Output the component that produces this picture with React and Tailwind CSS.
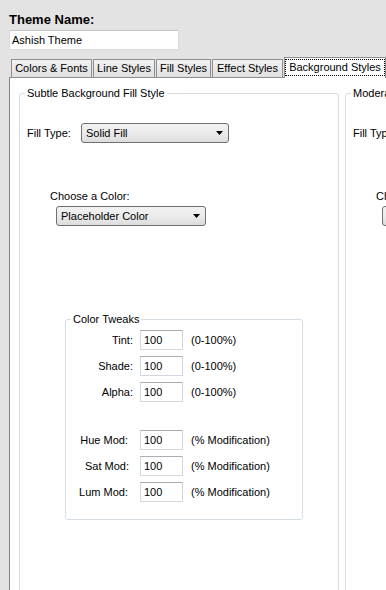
import React from 'react';

const font = "font-['Liberation_Sans',Arial,sans-serif]";

const Select = ({ value, className }) => (
    <div className={`flex items-center h-[20px] border border-[#707070] rounded-[3px] bg-gradient-to-b from-[#f2f2f2] via-[#ebebeb] to-[#dddddd] pl-[4px] pr-[5px] text-[11px] text-black ${className}`}>
        <span className="flex-1 truncate">{value}</span>
        <svg width="7" height="4" viewBox="0 0 7 4">
            <polygon points="0,0 7,0 3.5,4" fill="#000" />
        </svg>
    </div>
);

const Legend = ({ children }) => (
    <span className="block w-fit -mt-[7px] ml-[5px] px-[2px] bg-white leading-[13px] text-[11px] text-black whitespace-nowrap">
        {children}
    </span>
);

const TweakRow = ({ label, hint, labelClass = '', className = '' }) => (
    <div className={`flex items-center h-[20px] ${className}`}>
        <span className={`w-[67px] text-right text-[11px] text-black ${labelClass}`}>{label}</span>
        <div className="ml-[7px] w-[43px] h-[20px] bg-white border border-[#d3d7de] border-t-[#abadb3] flex items-center pl-[3px] text-[11px] text-black">
            100
        </div>
        <span className="ml-[8px] text-[11px] text-black whitespace-nowrap">{hint}</span>
    </div>
);

const FillPanel = ({ title }) => (
    <div className="shrink-0 w-[320px] h-[520px] border border-[#d5dde5] rounded-[3px]">
        <Legend>{title}</Legend>

        {/* Fill type */}
        <div className="flex items-center mt-[23px] pl-[7px]">
            <span className="w-[54px] text-[11px] text-black">Fill Type:</span>
            <Select value="Solid Fill" className="w-[148px]" />
        </div>

        {/* Color chooser */}
        <div className="mt-[47px] ml-[30px] leading-[13px] text-[11px] text-black">Choose a Color:</div>
        <Select value="Placeholder Color" className="mt-[3px] ml-[36px] w-[150px]" />

        {/* Color tweaks */}
        <div className="mt-[93px] ml-[45px] w-[238px] h-[201px] border border-[#d5dde5] rounded-[3px]">
            <Legend>Color Tweaks</Legend>
            <div className="mt-[4px] flex flex-col">
                <TweakRow label="Tint:" hint="(0-100%)" />
                <TweakRow label="Shade:" hint="(0-100%)" className="mt-[6px]" />
                <TweakRow label="Alpha:" hint="(0-100%)" className="mt-[6px]" />
                <TweakRow label="Hue Mod:" hint="(% Modification)" labelClass="pr-[5px]" className="mt-[28px]" />
                <TweakRow label="Sat Mod:" hint="(% Modification)" labelClass="pr-[4px]" className="mt-[6px]" />
                <TweakRow label="Lum Mod:" hint="(% Modification)" labelClass="pr-[5px]" className="mt-[6px]" />
            </div>
        </div>
    </div>
);

const tabs = [
    { name: 'Colors & Fonts', w: 'w-[81px]' },
    { name: 'Line Styles', w: 'w-[62px]' },
    { name: 'Fill Styles', w: 'w-[55px]' },
    { name: 'Effect Styles', w: 'w-[71px]' },
];

const App = () => {
    return (
        <div className={`w-[386px] h-[590px] overflow-hidden bg-[#e3e3e3] pt-[12px] ${font}`}>
            <div className="pl-[9px] text-[13px] leading-[15px] font-bold text-black">Theme Name:</div>
            <div className="ml-[9px] mt-[3px] w-[170px] h-[20px] bg-white border border-[#dcdcdc] border-t-[#c4c4c4] flex items-center pl-[2px] text-[11px] text-black">
                Ashish Theme
            </div>

            {/* Tabs */}
            <div className="flex items-end gap-[1px] pl-[11px] mt-[7px] h-[20px]">
                {tabs.map((t) => (
                    <div
                        key={t.name}
                        className={`${t.w} shrink-0 h-[18px] border border-b-0 border-[#8e8f8f] bg-gradient-to-b from-[#f2f2f2] to-[#e0e0e0] flex items-center justify-center text-[11px] text-black whitespace-nowrap`}
                    >
                        {t.name}
                    </div>
                ))}
                <div className="relative z-10 -mb-px w-[102px] shrink-0 h-[21px] border border-b-0 border-[#8e8f8f] bg-white flex items-start justify-center pt-[2px] text-[11px] text-black whitespace-nowrap">
                    <span className="outline outline-1 outline-dotted outline-black px-[3px] leading-[15px]">Background Styles</span>
                </div>
            </div>

            {/* Tab panel */}
            <div className="ml-[9px] h-[600px] bg-white border-l border-t border-l-[#80838c] border-t-[#8e8f8f] pl-[9px] pt-[15px] flex gap-[6px]">
                <FillPanel title="Subtle Background Fill Style" />
                <FillPanel title="Moderate Background Fill Style" />
            </div>
        </div>
    );
};

export default App;
